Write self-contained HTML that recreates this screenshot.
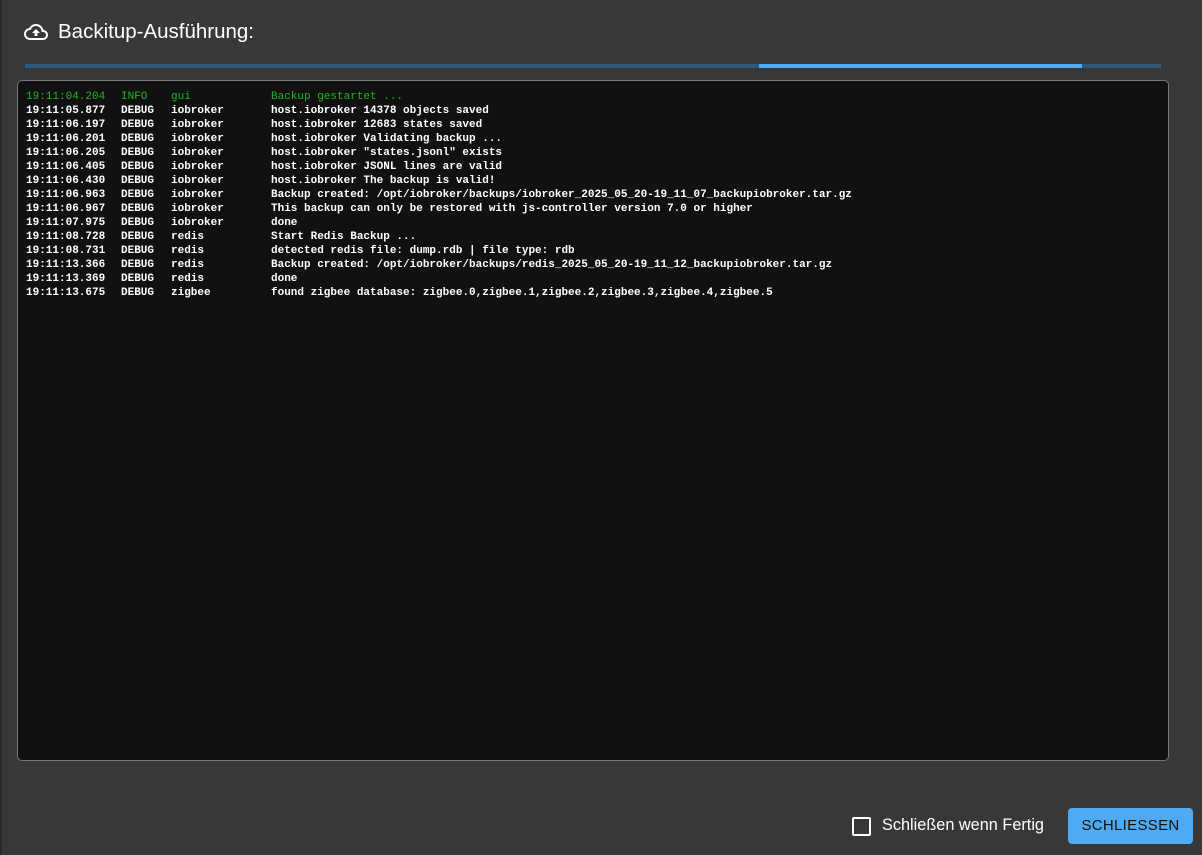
<!DOCTYPE html>
<html><head><meta charset="utf-8"><style>
html,body{margin:0;padding:0;width:1202px;height:855px;overflow:hidden;background:#383838;font-family:"Liberation Sans",sans-serif;}
.edge{position:absolute;left:0;top:0;width:2px;height:855px;background:#2a2a2a;}
.title{position:absolute;left:24px;top:19px;color:#fff;font-size:20.5px;line-height:26px;display:flex;align-items:center;}
.title svg{margin-right:10px}
.bar{position:absolute;left:25px;top:64px;width:1136px;height:4px;background:#2a5a80;}
.bar i{position:absolute;left:734px;top:0;width:323px;height:4px;background:#4dabf5;}
.log{position:absolute;left:17px;top:80px;width:1150px;height:679px;background:#111;border:1px solid #777;border-radius:5px;}
.ln{position:absolute;left:0;height:14px;font-family:"Liberation Mono",monospace;font-size:11px;font-weight:bold;color:#fff;white-space:pre;line-height:14px;}
.ln span{position:absolute;top:0}
.g{color:#1fb51f;font-weight:normal}
.chk{position:absolute;left:852px;top:817px;width:15px;height:15px;border:2px solid #fff;border-radius:2px;}
.lbl{position:absolute;left:882px;top:816px;color:#fff;font-size:16.3px;}
.btn{position:absolute;left:1068px;top:808px;width:125px;height:36px;background:#4dabf5;border-radius:4px;color:#111;font-size:15px;line-height:36px;text-align:center;letter-spacing:.3px;}
</style></head><body>
<div class="edge"></div>
<div class="title"><svg width="24" height="24" viewBox="0 0 24 24"><path d="M19.35 10.04A7.49 7.49 0 0 0 12 4C9.110 4 6.6 5.64 5.35 8.04A5.994 5.994 0 0 0 0 14c0 3.31 2.69 6 6 6h13c2.76 0 5-2.24 5-5 0-2.64-2.05-4.78-4.65-4.960zM19 18H6c-2.21 0-4-1.79-4-4 0-2.05 1.53-3.76 3.56-3.97l1.07-.11.5-.95A5.47 5.47 0 0 1 12 6c2.62 0 4.88 1.86 5.39 4.43l.3 1.5 1.53.11A2.98 2.98 0 0 1 22 15c0 1.65-1.35 3-3 3zM8 13h2.55v3h2.9v-3H16l-4-4z" fill="#fff"/></svg>Backitup-Ausführung:</div>
<div class="bar"><i></i></div>
<div class="log">
<div class="ln g" style="top:9px"><span style="left:8px">19:11:04.204</span><span style="left:103px">INFO</span><span style="left:153px">gui</span><span style="left:253px">Backup gestartet ...</span></div>
<div class="ln" style="top:23px"><span style="left:8px">19:11:05.877</span><span style="left:103px">DEBUG</span><span style="left:153px">iobroker</span><span style="left:253px">host.iobroker 14378 objects saved</span></div>
<div class="ln" style="top:37px"><span style="left:8px">19:11:06.197</span><span style="left:103px">DEBUG</span><span style="left:153px">iobroker</span><span style="left:253px">host.iobroker 12683 states saved</span></div>
<div class="ln" style="top:51px"><span style="left:8px">19:11:06.201</span><span style="left:103px">DEBUG</span><span style="left:153px">iobroker</span><span style="left:253px">host.iobroker Validating backup ...</span></div>
<div class="ln" style="top:65px"><span style="left:8px">19:11:06.205</span><span style="left:103px">DEBUG</span><span style="left:153px">iobroker</span><span style="left:253px">host.iobroker "states.jsonl" exists</span></div>
<div class="ln" style="top:79px"><span style="left:8px">19:11:06.405</span><span style="left:103px">DEBUG</span><span style="left:153px">iobroker</span><span style="left:253px">host.iobroker JSONL lines are valid</span></div>
<div class="ln" style="top:93px"><span style="left:8px">19:11:06.430</span><span style="left:103px">DEBUG</span><span style="left:153px">iobroker</span><span style="left:253px">host.iobroker The backup is valid!</span></div>
<div class="ln" style="top:107px"><span style="left:8px">19:11:06.963</span><span style="left:103px">DEBUG</span><span style="left:153px">iobroker</span><span style="left:253px">Backup created: /opt/iobroker/backups/iobroker_2025_05_20-19_11_07_backupiobroker.tar.gz</span></div>
<div class="ln" style="top:121px"><span style="left:8px">19:11:06.967</span><span style="left:103px">DEBUG</span><span style="left:153px">iobroker</span><span style="left:253px">This backup can only be restored with js-controller version 7.0 or higher</span></div>
<div class="ln" style="top:135px"><span style="left:8px">19:11:07.975</span><span style="left:103px">DEBUG</span><span style="left:153px">iobroker</span><span style="left:253px">done</span></div>
<div class="ln" style="top:149px"><span style="left:8px">19:11:08.728</span><span style="left:103px">DEBUG</span><span style="left:153px">redis</span><span style="left:253px">Start Redis Backup ...</span></div>
<div class="ln" style="top:163px"><span style="left:8px">19:11:08.731</span><span style="left:103px">DEBUG</span><span style="left:153px">redis</span><span style="left:253px">detected redis file: dump.rdb | file type: rdb</span></div>
<div class="ln" style="top:177px"><span style="left:8px">19:11:13.366</span><span style="left:103px">DEBUG</span><span style="left:153px">redis</span><span style="left:253px">Backup created: /opt/iobroker/backups/redis_2025_05_20-19_11_12_backupiobroker.tar.gz</span></div>
<div class="ln" style="top:191px"><span style="left:8px">19:11:13.369</span><span style="left:103px">DEBUG</span><span style="left:153px">redis</span><span style="left:253px">done</span></div>
<div class="ln" style="top:205px"><span style="left:8px">19:11:13.675</span><span style="left:103px">DEBUG</span><span style="left:153px">zigbee</span><span style="left:253px">found zigbee database: zigbee.0,zigbee.1,zigbee.2,zigbee.3,zigbee.4,zigbee.5</span></div>
</div>
<div class="chk"></div>
<div class="lbl">Schließen wenn Fertig</div>
<div class="btn">SCHLIESSEN</div>
</body></html>
